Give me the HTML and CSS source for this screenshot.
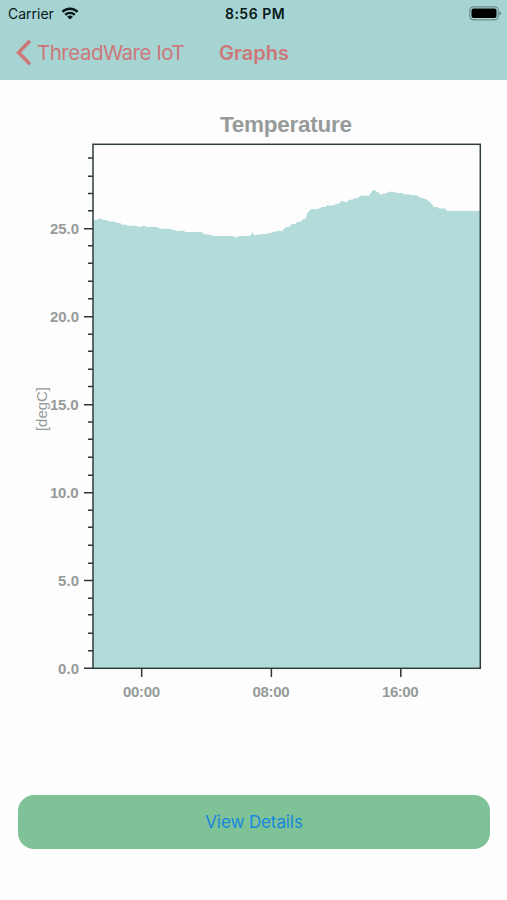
FILE: index.html
```
<!DOCTYPE html>
<html lang="en">
<head>
    <meta charset="utf-8">
    <title>Graphs</title>
    <link rel="stylesheet" href="styles.css">
</head>
<body>
    <header class="header">
        <div class="status-bar">
            <div class="carrier">
                <span class="carrier-name">Carrier</span>
                <svg class="wifi" viewBox="0 0 18 13" width="18" height="13">
                    <path d="M1.4 4.9 A10.7 10.7 0 0 1 16.6 4.9" />
                    <path d="M4.2 7.9 A6.8 6.8 0 0 1 13.8 7.9" />
                    <path class="wifi-dot" d="M6.1 9.8 A4.2 4.2 0 0 1 11.9 9.8 L9 12.6 Z" />
                </svg>
            </div>
            <div class="time">8:56 PM</div>
            <svg class="battery" viewBox="0 0 33 15" width="33" height="15">
                <rect class="battery-case" x="0.8" y="0.8" width="28.4" height="13" rx="3.6" />
                <rect x="2.5" y="2.5" width="25" height="9.6" rx="2" />
                <path class="battery-tip" d="M30.5 5.2 Q32 5.8 32 7.3 Q32 8.8 30.5 9.4 Z" />
            </svg>
        </div>
        <nav class="nav-bar">
            <a class="back" href="#">
                <svg class="chevron" viewBox="0 0 16 27" width="16" height="27">
                    <path d="M14 1.8 L2.6 13.5 L14 25.2" />
                </svg>
                <span class="back-label">ThreadWare IoT</span>
            </a>
            <h1 class="title">Graphs</h1>
        </nav>
    </header>

    <main class="content">
        <svg class="chart" viewBox="0 80 507 640" width="507" height="640">
            <rect class="chart-area" x="18" y="97" width="472" height="610" />
            <text class="chart-title" x="220" y="132" textLength="132">Temperature</text>

            <path class="series" d="M93 668 V220 H97 L98 219 H100 L101 218 L103 220 H107 L109 221.5 H114 L117 223 H120 L123 225 L126 224.6 L128 226 L131 225.8 H136 L138 226.8 H141 L144 225.4 L147 227 H157 L160 228.8 H170 L172 230 L174 229.6 L176 231 H181 L183 230.5 L186 232 H202 L204 234.3 H208 L210 235.2 H213 L214 236 H233 L236 237.5 L240 236 H249 L251 235 L252.5 232.2 L254 235 H256 L257 234.3 L259 235 L261 234 H266 L268 233 H271 L273 231.8 H276 L278 230.5 L282 231.3 L285 227.8 L287 227 H289 L292 224 H295 L298 221.8 L300 222 L304 218.8 H306 L307 213.5 L310 210 L312 209 H318 L322 207 H325 L327 205.5 H333 L336 204.2 L339 203.8 L342 200.6 L344 202 H347 L350 199.6 L352 199.8 L355 198 L357 198.3 L361 195.8 H369 L373 190 L375 190.2 L377 192.2 L378 192 L380 194.5 H382 L383 193.5 H386 L389 191.8 H394 L397 193 H402 L404 194.3 H409 L411 195.3 H417 L420 197.5 L423 198 L427 199.8 L430 202 L434 207 H438 L439 208.6 H445 L447 211 H480 V668 Z" />

            <rect class="frame" x="93" y="144.3" width="387.3" height="524" />

            <!-- one minor tick per degree -->
            <path class="ticks" d="M88 650.8 H93 M88 633.2 H93 M88 614.8 H93 M88 598.2 H93
                M88 563.2 H93 M88 545.2 H93 M88 527.2 H93 M88 510.2 H93
                M88 475.2 H93 M88 457.2 H93 M88 439.2 H93 M88 422 H93
                M88 386.5 H93 M88 369.2 H93 M88 351.2 H93 M88 334.2 H93
                M88 298.7 H93 M88 281.2 H93 M88 263.2 H93 M88 245.8 H93
                M88 210.7 H93 M88 193.5 H93 M88 176.2 H93 M88 158 H93" />
            <path class="ticks" d="M84 668.3 H93 M84 580.5 H93 M84 492.7 H93 M84 404.7 H93 M84 316.7 H93 M84 228.7 H93" />
            <path class="ticks" d="M141.7 668 V677 M271.4 668 V677 M400.8 668 V677" />

            <g class="labels">
                <text x="58" y="673.6" textLength="21">0.0</text>
                <text x="58" y="585.8" textLength="21">5.0</text>
                <text x="50" y="498" textLength="28.5">10.0</text>
                <text x="50" y="410.2" textLength="28.5">15.0</text>
                <text x="50" y="322.2" textLength="29">20.0</text>
                <text x="50" y="234.4" textLength="29">25.0</text>
                <text x="123" y="696.8" textLength="37">00:00</text>
                <text x="252.5" y="696.8" textLength="37">08:00</text>
                <text x="382" y="696.8" textLength="36.5">16:00</text>
            </g>
            <text class="unit" transform="translate(46.5 431) rotate(-90)" textLength="44">[degC]</text>
        </svg>

        <button class="details-button">View Details</button>
    </main>
</body>
</html>
```

FILE: styles.css
```
body {
    font-family: Inter, "Liberation Sans", sans-serif;
    margin: 0;
    background-color: #fefefe;
    min-height: 100vh;
}
.header {
    height: 79px;
    background-color: #a6d4d2;
    border-bottom: 1px solid #a9cfcd;
}
.status-bar {
    display: grid;
    grid-template-columns: 1fr auto 1fr;
    align-items: center;
    height: 27px;
    padding: 0 5px 0 8px;
    color: #071819;
}
.carrier {
    display: flex;
    align-items: center;
    gap: 7px;
}
.carrier-name {
    font-size: 14px;
}
.wifi {
    fill: none;
    stroke: #071819;
    stroke-width: 2.4;
}
.wifi .wifi-dot {
    fill: #071819;
    stroke: none;
}
.time {
    font-size: 14px;
    font-weight: 600;
    letter-spacing: 0.5px;
}
.battery {
    justify-self: end;
    fill: #000;
}
.battery .battery-case {
    fill: none;
    stroke: #6c8d8c;
    stroke-width: 1.2;
}
.battery .battery-tip {
    fill: #58706f;
}
.nav-bar {
    display: flex;
    align-items: center;
    height: 51px;
    padding-left: 16px;
    color: #cd7779;
}
.back {
    display: flex;
    align-items: center;
    gap: 5px;
    width: 203px;
    color: inherit;
    text-decoration: none;
}
.back-label {
    font-size: 20.5px;
    letter-spacing: -0.5px;
    white-space: nowrap;
}
.chevron {
    fill: none;
    stroke: #cd7779;
    stroke-width: 3.6;
}
.title {
    margin: 0;
    font-size: 20px;
    font-weight: 600;
}
.content {
    display: flex;
    flex-direction: column;
}
.chart {
    display: block;
    font-family: "Liberation Sans", Arial, sans-serif;
    fill: #969b9a;
}
.chart .chart-area {
    fill: #fdfdfd;
}
.chart-title {
    font-size: 22.5px;
    font-weight: bold;
}
.series {
    fill: #b3dbda;
}
.frame {
    fill: none;
    stroke: #303c3c;
    stroke-width: 1.5;
}
.ticks {
    stroke: #303636;
    stroke-width: 1.5;
}
.labels {
    font-size: 15px;
    font-weight: bold;
}
.unit {
    font-size: 15px;
}
.details-button {
    height: 54px;
    margin: 75px 17px 0 18px;
    border: none;
    border-radius: 16px;
    background-color: #7fc297;
    color: #1687dc;
    font-family: inherit;
    font-size: 17px;
    letter-spacing: -0.1px;
    cursor: pointer;
}
```
